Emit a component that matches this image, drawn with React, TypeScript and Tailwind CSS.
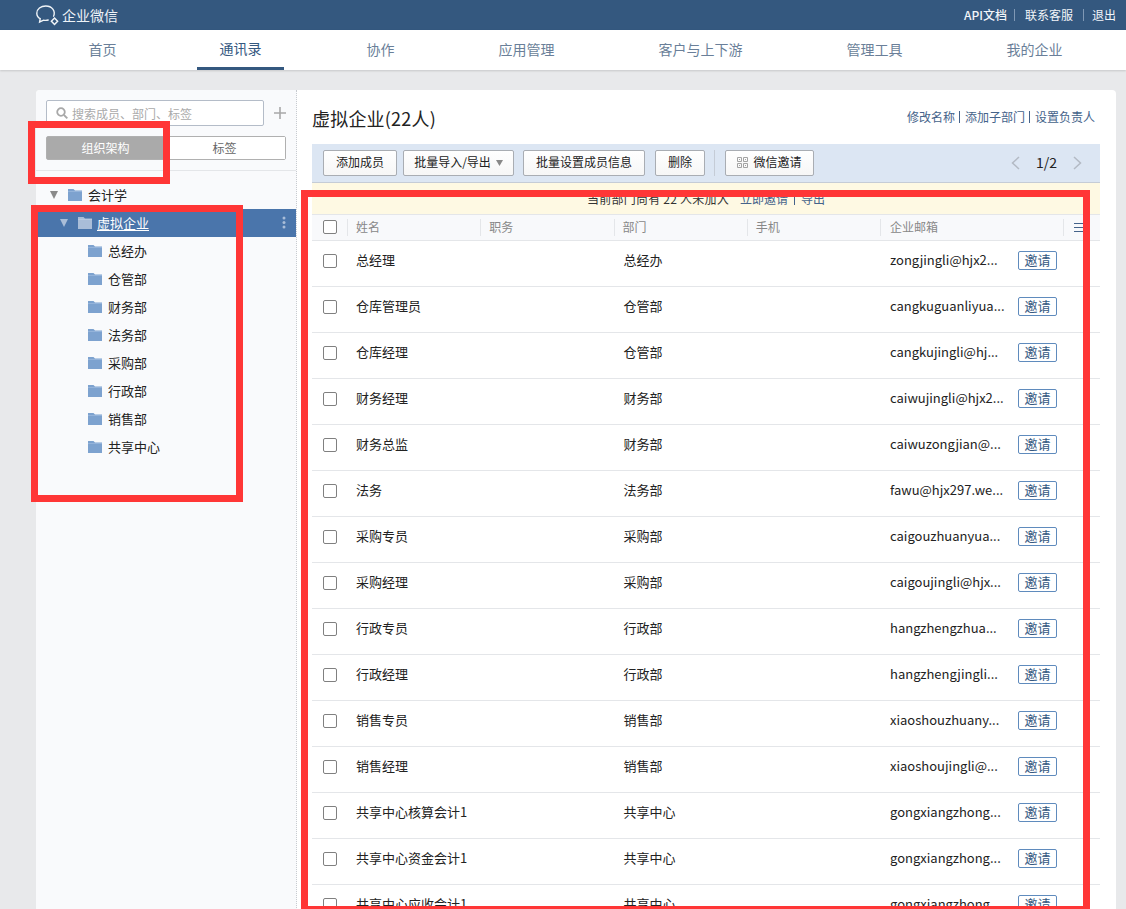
import React from "react";

const font = { fontFamily: '"Noto Sans CJK SC", "Noto Sans", sans-serif' };

const nav = ["首页", "通讯录", "协作", "应用管理", "客户与上下游", "管理工具", "我的企业"];
const depts = ["总经办", "仓管部", "财务部", "法务部", "采购部", "行政部", "销售部", "共享中心"];
const rows = [
  ["总经理", "总经办", "zongjingli@hjx2..."],
  ["仓库管理员", "仓管部", "cangkuguanliyua..."],
  ["仓库经理", "仓管部", "cangkujingli@hj..."],
  ["财务经理", "财务部", "caiwujingli@hjx2..."],
  ["财务总监", "财务部", "caiwuzongjian@..."],
  ["法务", "法务部", "fawu@hjx297.we..."],
  ["采购专员", "采购部", "caigouzhuanyua..."],
  ["采购经理", "采购部", "caigoujingli@hjx..."],
  ["行政专员", "行政部", "hangzhengzhua..."],
  ["行政经理", "行政部", "hangzhengjingli..."],
  ["销售专员", "销售部", "xiaoshouzhuany..."],
  ["销售经理", "销售部", "xiaoshoujingli@..."],
  ["共享中心核算会计1", "共享中心", "gongxiangzhong..."],
  ["共享中心资金会计1", "共享中心", "gongxiangzhong..."],
  ["共享中心应收会计1", "共享中心", "gongxiangzhong..."],
];

function Folder({ light }: { light?: boolean }) {
  return (
    <svg width="14" height="12" viewBox="0 0 14 12" className="shrink-0">
      <path d="M0 0H5.5L7 1.5H14V12H0Z" fill={light ? "#a9bdd8" : "#7da2cf"} />
      <path d="M0 2.5H14" stroke={light ? "#c4d2e5" : "#a5bfe0"} strokeWidth="0.6" />
    </svg>
  );
}

function Tri({ color }: { color: string }) {
  return (
    <svg width="8" height="8" viewBox="0 0 8 8" className="shrink-0">
      <path d="M0 0H8L4 8Z" fill={color} />
    </svg>
  );
}

function Box() {
  return <span className="block w-[14px] h-[14px] shrink-0 rounded-[2px] border border-[#808080] bg-white" />;
}

function Btn({ children, w }: { children: React.ReactNode; w: string }) {
  return (
    <div className={`${w} h-[26px] shrink-0 flex items-center justify-center gap-[5px] pb-[2px] rounded-[2px] border border-[#a9adb3] bg-gradient-to-b from-white to-[#f6f6f6] text-[12px] text-[#222]`}>
      {children}
    </div>
  );
}

export default function App() {
  return (
    <div style={font} className="relative h-[909px] w-[1126px] overflow-hidden bg-[#e8e9eb] text-[13px] text-[#222]">
      <header className="h-[30px] bg-[#34587f] flex items-center text-white">
        <div className="ml-[36px] flex items-center gap-[3px]">
          <svg width="23" height="22" viewBox="0 0 23 22" fill="none" stroke="#f0f4f8" strokeWidth="1.4">
            <path d="M17.6 12.2C19.8 7 16 2 9.8 2C4.8 2 .8 5 .8 9.2C.8 11.6 2.1 13.6 4.2 14.7L3.6 18L7.6 16.2C9.3 16.5 10.8 16.5 12.2 16" strokeLinecap="round" />
            <path d="M18.5 14L21.6 17.2L18.5 20.4L15.4 17.2Z" strokeWidth="1.5" />
          </svg>
          <span className="text-[14px] text-[#eef3f8]">企业微信</span>
        </div>
        <div className="ml-auto mr-[10px] flex items-center text-[12px] text-[#f2f5f9]">
          <span className="font-medium">API文档</span>
          <span className="ml-[7px] mr-[10px] h-[12px] w-px bg-[#7f98b5]" />
          <span>联系客服</span>
          <span className="ml-[10px] mr-[8px] h-[12px] w-px bg-[#7f98b5]" />
          <span>退出</span>
        </div>
      </header>

      <nav className="h-[40px] bg-white flex pl-[66px] gap-[59px] shadow-[0_1px_2px_rgba(0,0,0,0.15)]">
        {nav.map((n, i) => (
          <div
            key={n}
            className={`px-[22.5px] h-[40px] flex items-center pb-[2px] text-[14px] ${i === 1 ? "-ml-px border-b-[3px] border-[#34587f] text-[#34587f] pt-[3px] pb-[3px] mr-px" : "text-[#6a7f99]"}`}
          >
            {n}
          </div>
        ))}
      </nav>

      <main className="ml-[36px] mt-[20px] mr-[10px] h-[900px] flex rounded-t-[4px] bg-white overflow-hidden">
        <aside className="w-[261px] shrink-0 bg-[#f9fafc] border-r border-dotted border-[#c8cbd0]">
          <div className="px-[10px] pt-[10px] pb-[10px] border-b border-[#e4e6e9]">
            <div className="flex items-center">
              <div className="w-[218px] h-[26px] rounded-[2px] border border-[#b4bcc8] bg-white flex items-center pl-[9px] gap-[4px]">
                <svg width="12" height="12" viewBox="0 0 12 12" fill="none" stroke="#a8a8a8" strokeWidth="1.8">
                  <circle cx="5" cy="5" r="3.8" />
                  <path d="M8 8L11.3 11.3" />
                </svg>
                <span className="text-[12px] text-[#aaa] pt-[1px]">搜索成员、部门、标签</span>
              </div>
              <svg width="12" height="12" viewBox="0 0 12 12" className="ml-[10px]" stroke="#a8a8a8" strokeWidth="1.6">
                <path d="M6 0V12M0 6H12" />
              </svg>
            </div>
            <div className="mt-[10px] w-[240px] h-[24px] flex rounded-[2px] border border-[#b0b0b0] text-[12px]">
              <div className="w-1/2 bg-[#aaaaaa] text-white flex items-center justify-center pr-[2px]">组织架构</div>
              <div className="w-1/2 bg-white text-[#666] flex items-center justify-center pr-[2px]">标签</div>
            </div>
          </div>
          <div className="pt-[10px]">
            <div className="h-[28px] flex items-center pl-[14px] pb-[1px]">
              <Tri color="#8a8a8a" />
              <span className="ml-[10px]"><Folder /></span>
              <span className="ml-[6px]">会计学</span>
            </div>
            <div className="h-[28px] flex items-center pl-[24px] pr-[10px] pb-[1px] bg-[#4a75ab] text-white">
              <Tri color="#a9bdd8" />
              <span className="ml-[10px]"><Folder light /></span>
              <span className="ml-[5px] underline underline-offset-2">虚拟企业</span>
              <svg width="4" height="13" viewBox="0 0 4 13" className="ml-auto" fill="#a9bdd8">
                <circle cx="2" cy="2" r="1.5" />
                <circle cx="2" cy="6.5" r="1.5" />
                <circle cx="2" cy="11" r="1.5" />
              </svg>
            </div>
            {depts.map((d) => (
              <div key={d} className="h-[28px] flex items-center pl-[52px] pb-[1px]">
                <Folder />
                <span className="ml-[6px]">{d}</span>
              </div>
            ))}
          </div>
        </aside>

        <section className="flex-1 pl-[15px] pr-[16px]">
          <div className="h-[54px] flex items-start">
            <h1 className="mt-[15px] text-[18px] tracking-[0.2px] leading-[26px] text-[#222]">虚拟企业(22人)</h1>
            <div className="ml-auto mr-[5px] mt-[18px] flex items-center text-[12px] leading-[18px] text-[#45638a]">
              <span>修改名称</span>
              <span className="mx-[4.5px] h-[12px] w-px bg-[#45638a]" />
              <span>添加子部门</span>
              <span className="mx-[4.5px] h-[12px] w-px bg-[#45638a]" />
              <span>设置负责人</span>
            </div>
          </div>

          <div className="h-[39px] bg-[#dce6f3] border-b border-[#c5ccd6] flex items-center pl-[11px] pb-[1px]">
            <Btn w="w-[74px]">添加成员</Btn>
            <div className="ml-[6px]">
              <Btn w="w-[111px]">
                批量导入/导出
                <svg width="7" height="6" viewBox="0 0 7 6" className="mt-[2px]"><path d="M0 0H7L3.5 6Z" fill="#888" /></svg>
              </Btn>
            </div>
            <div className="ml-[9px]"><Btn w="w-[122px]">批量设置成员信息</Btn></div>
            <div className="ml-[10px]"><Btn w="w-[50px]">删除</Btn></div>
            <span className="ml-[9px] h-[26px] w-px bg-[#c5ccd6]" />
            <div className="ml-[10px]">
              <Btn w="w-[89px]">
                <svg width="11" height="11" viewBox="0 0 11 11" fill="none" stroke="#a3a3a3" strokeWidth="1" className="mt-[2px]">
                  <path d="M.5.5H4.5V4.5H.5ZM6.5.5H10.5V4.5H6.5ZM.5 6.5H4.5V10.5H.5ZM6.5 6.5H10.5V10.5H6.5Z" />
                  <path d="M2 2.5H3M8 2.5H9M2 8.5H3M8 8.5H9" />
                </svg>
                微信邀请
              </Btn>
            </div>
            <div className="ml-auto mr-[18px] flex items-center">
              <svg width="9" height="14" viewBox="0 0 9 14" fill="none" stroke="#b3bac4" strokeWidth="1.5"><path d="M8 1L1.5 7L8 13" /></svg>
              <span className="mx-[16px] text-[14px] text-[#222]">1/2</span>
              <svg width="9" height="14" viewBox="0 0 9 14" fill="none" stroke="#b3bac4" strokeWidth="1.5"><path d="M1 1L7.5 7L1 13" /></svg>
            </div>
          </div>

          <div className="h-[31px] bg-[#fef9e3] flex items-center justify-center text-[12px] text-[#333]">
            <span className="tracking-[0.25px]">当前部门尚有 22 人未加入</span>
            <span className="ml-[11px] text-[#45638a]">立即邀请</span>
            <span className="mx-[6px] h-[12px] w-px bg-[#45638a]" />
            <span className="text-[#45638a]">导出</span>
          </div>

          <div className="h-[27px] bg-[#f8f9fb] border-y border-[#e4e6e9] flex items-center pb-[1px] text-[12px] text-[#888]">
            <div className="w-[35px] pl-[11px] shrink-0"><Box /></div>
            {["姓名", "职务", "部门", "手机"].map((h) => (
              <div key={h} className="w-[133.25px] shrink-0 h-[17px] border-l border-[#e4e6e9] pl-[8px] flex items-center pb-[1px]">{h}</div>
            ))}
            <div className="w-[182.5px] shrink-0 h-[17px] border-l border-[#e4e6e9] pl-[9px] flex items-center pb-[1px]">企业邮箱</div>
            <div className="h-[17px] border-l border-[#e4e6e9] pl-[10px] flex items-center">
              <svg width="10" height="9" viewBox="0 0 10 9" stroke="#45638a" strokeWidth="1"><path d="M0 .5H10M0 4.5H10M0 8.5H10" /></svg>
            </div>
          </div>

          {rows.map((r, i) => (
            <div key={i} className="h-[46px] border-b border-[#e4e6e9] flex items-center pb-[6px]">
              <div className="w-[35px] pl-[11px] shrink-0"><Box /></div>
              <div className="w-[266.5px] shrink-0 pl-[9px] -mt-[2px]">{r[0]}</div>
              <div className="w-[266.5px] shrink-0 pl-[10px] -mt-[2px]">{r[1]}</div>
              <div className="w-[138px] shrink-0 pl-[10px] -mt-[2px] whitespace-nowrap">{r[2]}</div>
              <div className="w-[39px] h-[19px] shrink-0 rounded-[2px] border border-[#5f8bbd] bg-white flex items-center justify-center pb-[1px] text-[13px] text-[#34587f]">邀请</div>
            </div>
          ))}
        </section>
      </main>

      <div className="absolute left-[28px] top-[121px] w-[142px] h-[63px] border-[7px] border-[#ff3636]" />
      <div className="absolute left-[31px] top-[205px] w-[212px] h-[297px] border-[7px] border-[#ff3636]" />
      <div className="absolute left-[301px] top-[190px] w-[789px] h-[723px] border-[7px] border-[#ff3636]" />
    </div>
  );
}
